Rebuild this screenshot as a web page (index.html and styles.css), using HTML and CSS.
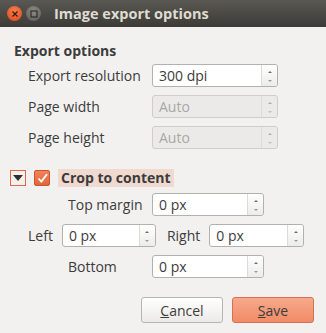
FILE: index.html
```html
<!DOCTYPE html>
<html lang="en">
<head>
    <meta charset="UTF-8">
    <meta name="viewport" content="width=device-width, initial-scale=1.0">
    <title>Image export options</title>
    <link rel="stylesheet" href="styles.css">
</head>
<body>

    <div class="titlebar">
        <span class="winbtn close">
            <svg width="8" height="8" viewBox="0 0 8 8"><path d="M1.5 1.5 L6.5 6.5 M6.5 1.5 L1.5 6.5" stroke="#3a1a10" stroke-width="1.3"/></svg>
        </span>
        <span class="winbtn mini">
            <svg width="8" height="8" viewBox="0 0 8 8"><rect x="1" y="1" width="6" height="6" fill="none" stroke="#2e2e2c" stroke-width="1.2"/></svg>
        </span>
        <span class="title">Image export options</span>
    </div>

    <div class="dialog">
        <div class="group-title">Export options</div>
        <div class="export-grid">
            <span class="label">Export resolution</span>
            <div class="spin">
                <span class="value">300 dpi</span>
                <span class="arrows"><i class="up"></i><i class="down"></i></span>
            </div>

            <span class="label">Page width</span>
            <div class="spin disabled">
                <span class="value">Auto</span>
                <span class="arrows"><i class="up"></i><i class="down"></i></span>
            </div>

            <span class="label">Page height</span>
            <div class="spin disabled">
                <span class="value">Auto</span>
                <span class="arrows"><i class="up"></i><i class="down"></i></span>
            </div>
        </div>

        <div class="crop-head">
            <span class="collapse"><i></i></span>
            <span class="check">
                <svg width="11" height="11" viewBox="0 0 11 11"><path d="M1.5 5.5 L4.3 8.5 L10 1.2" fill="none" stroke="#fff" stroke-width="1.8"/></svg>
            </span>
            <span class="crop-label">Crop to content</span>
        </div>

        <div class="crop-row centered">
            <span class="label">Top margin</span>
            <div class="spin small">
                <span class="value">0 px</span>
                <span class="arrows"><i class="up"></i><i class="down"></i></span>
            </div>
        </div>
        <div class="crop-row sides">
            <span class="label">Left</span>
            <div class="spin side">
                <span class="value">0 px</span>
                <span class="arrows"><i class="up"></i><i class="down"></i></span>
            </div>
            <span class="label right-label">Right</span>
            <div class="spin side">
                <span class="value">0 px</span>
                <span class="arrows"><i class="up"></i><i class="down"></i></span>
            </div>
        </div>
        <div class="crop-row centered">
            <span class="label">Bottom</span>
            <div class="spin small">
                <span class="value">0 px</span>
                <span class="arrows"><i class="up"></i><i class="down"></i></span>
            </div>
        </div>

        <div class="buttons">
            <button class="btn"><u>C</u>ancel</button>
            <button class="btn save"><u>S</u>ave</button>
        </div>
    </div>

</body>
</html>
```

FILE: styles.css
```css
body {
    margin: 0;
    background-color: #f2f1f0;
    font-family: "Open Sans", "DejaVu Sans", sans-serif;
    font-size: 14px;
    color: #3c3c3c;
}
.titlebar {
    height: 27px;
    display: flex;
    align-items: center;
    padding-left: 7px;
    background: linear-gradient(#5a5852, #3c3b37);
}
.winbtn {
    width: 15px;
    height: 15px;
    border-radius: 50%;
    display: flex;
    align-items: center;
    justify-content: center;
    margin-right: 4px;
}
.close {
    background: radial-gradient(circle at 50% 35%, #f7804f, #e0431a);
}
.mini {
    background: radial-gradient(circle at 50% 35%, #8c8b86, #5b5a55);
}
.title {
    margin-left: 9px;
    font-weight: bold;
    font-size: 14.5px;
    color: #dfdbd2;
}
.dialog {
    padding: 14px 12px 0 14px;
}
.group-title {
    font-weight: bold;
    line-height: 18px;
    margin-top: 1px;
}
.export-grid {
    display: grid;
    grid-template-columns: 124px 126px;
    row-gap: 8px;
    margin-top: 4px;
    padding-left: 14px;
    align-items: center;
}
.label {
    white-space: nowrap;
}
.spin {
    display: flex;
    height: 21px;
    border: 1px solid #b3b1ad;
    border-radius: 3px;
    background: #fff;
}
.spin .value {
    flex: 1;
    padding-left: 6px;
    line-height: 21px;
}
.spin .arrows {
    width: 15px;
    border-left: 1px solid #dddbd8;
    display: flex;
    flex-direction: column;
    justify-content: space-between;
    align-items: center;
    padding: 6px 0 4px 0;
    background: linear-gradient(#ffffff, #ececea);
    border-radius: 0 3px 3px 0;
}
.spin .arrows i {
    width: 0;
    height: 0;
    border-left: 2px solid transparent;
    border-right: 2px solid transparent;
}
.spin .arrows .up {
    border-bottom: 2px solid #6e6e6e;
}
.spin .arrows .down {
    border-top: 2px solid #9a9a9a;
}
.spin.disabled {
    background: #ebeae8;
    border-color: #cfcdca;
    color: #a9a8a5;
}
.spin.disabled .arrows {
    background: #ebeae8;
}
.spin.disabled .arrows i {
    opacity: 0.5;
}
.crop-head {
    display: flex;
    align-items: center;
    margin-top: 20px;
    margin-left: -4px;
}
.collapse {
    width: 14px;
    height: 14px;
    border: 1px solid #e8663c;
    display: flex;
    align-items: center;
    justify-content: center;
}
.collapse i {
    width: 0;
    height: 0;
    border-left: 5px solid transparent;
    border-right: 5px solid transparent;
    border-top: 6px solid #2f2f2f;
}
.check {
    width: 14px;
    height: 14px;
    margin-left: 8px;
    border-radius: 2px;
    background: linear-gradient(#f2835a, #e2653a);
    border: 1px solid #c8552e;
    display: flex;
    align-items: center;
    justify-content: center;
}
.crop-label {
    margin-left: 8px;
    padding: 0 3px;
    font-weight: bold;
    background: #f0d9cf;
    line-height: 18px;
}
.crop-row {
    display: flex;
    align-items: center;
    margin-top: 8px;
}
.crop-head + .crop-row {
    margin-top: 6px;
}
.crop-row.centered {
    padding-left: 54px;
}
.crop-row.centered .label {
    width: 84px;
}
.spin.small {
    width: 110px;
}
.crop-row.sides {
    padding-left: 14px;
}
.spin.side {
    width: 92px;
    margin-left: 9px;
}
.spin.side:last-child {
    width: 93px;
}
.right-label {
    margin-left: 11px;
}
.buttons {
    display: flex;
    justify-content: flex-end;
    gap: 9px;
    margin-top: 19px;
}
.btn {
    width: 82px;
    height: 26px;
    font-family: inherit;
    font-size: 14px;
    color: #3c3c3c;
    border: 1px solid #b7b5b1;
    border-radius: 3px;
    background: linear-gradient(#ffffff, #ebeae8);
}
.btn.save {
    border-color: #d7714d;
    background: linear-gradient(#f7a98c, #f18b66);
}
```
